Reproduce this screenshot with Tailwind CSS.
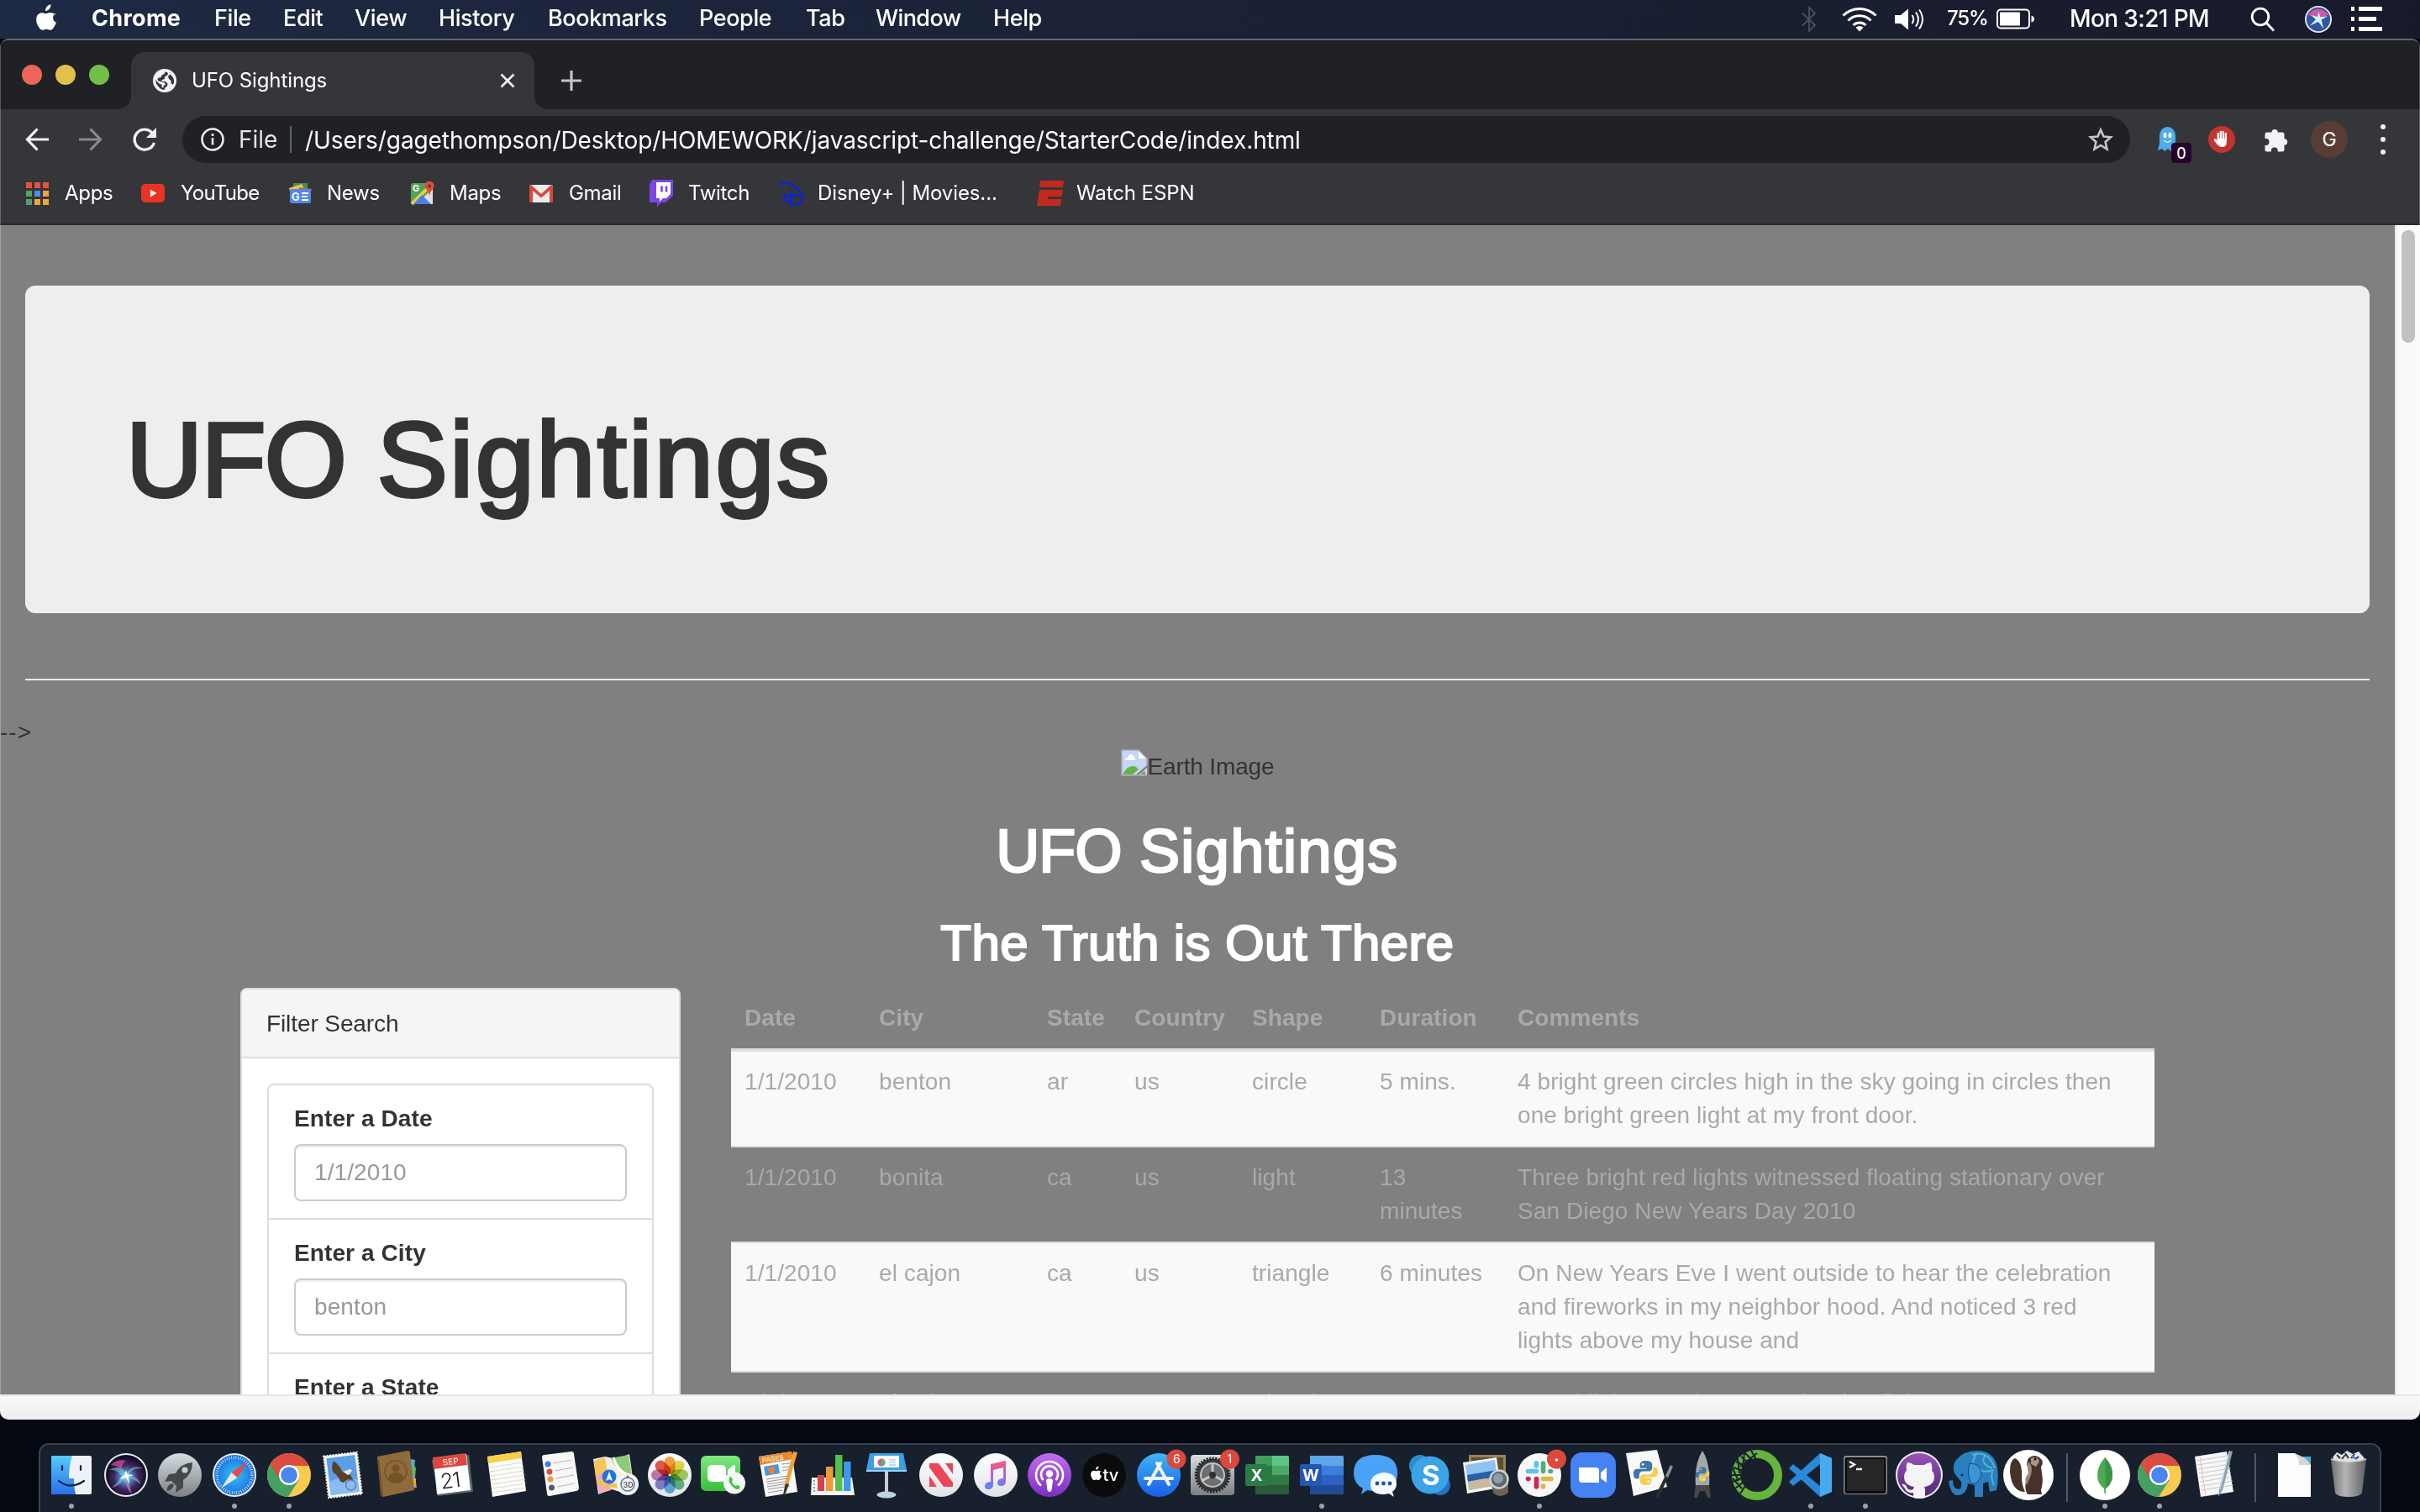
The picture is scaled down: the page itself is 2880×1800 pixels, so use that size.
<!DOCTYPE html>
<html lang="en">
<head>
<meta charset="utf-8">
<title>UFO Sightings</title>
<script src="https://cdn.jsdelivr.net/npm/@tailwindcss/browser@4"></script>
</head>
<body class="flex h-[1800px] w-[2880px] flex-col overflow-hidden bg-[#040810]">

<!-- Shared gradients and symbols -->
<svg class="absolute h-0 w-0" aria-hidden="true">
  <defs>
    <linearGradient id="blue" x1="0" y1="0" x2="0" y2="1"><stop offset="0" stop-color="#3fb4f8"/><stop offset="1" stop-color="#1a5de6"/></linearGradient>
    <linearGradient id="finder" x1="0" y1="0" x2="0" y2="1"><stop offset="0" stop-color="#55ccfa"/><stop offset="1" stop-color="#2a6fe8"/></linearGradient>
    <linearGradient id="silver" x1="0" y1="0" x2="0" y2="1"><stop offset="0" stop-color="#d5dee3"/><stop offset="1" stop-color="#7d8083"/></linearGradient>
    <linearGradient id="green" x1="0" y1="0" x2="0" y2="1"><stop offset="0" stop-color="#7fe87f"/><stop offset="1" stop-color="#38bf3c"/></linearGradient>
    <linearGradient id="purple" x1="0" y1="0" x2="0" y2="1"><stop offset="0" stop-color="#c36df0"/><stop offset="1" stop-color="#7a2fc0"/></linearGradient>
    <linearGradient id="git" x1="0" y1="0" x2="0" y2="1"><stop offset="0" stop-color="#9a52b5"/><stop offset="1" stop-color="#4f2878"/></linearGradient>
    <linearGradient id="white" x1="0" y1="0" x2="0" y2="1"><stop offset="0" stop-color="#fff"/><stop offset="1" stop-color="#dfe3e8"/></linearGradient>
    <linearGradient id="note" x1="0" y1="0" x2="0" y2="1"><stop offset="0" stop-color="#f9596b"/><stop offset=".45" stop-color="#c15bd8"/><stop offset="1" stop-color="#4f8df8"/></linearGradient>
    <linearGradient id="metal" x1="0" y1="0" x2="1" y2="0"><stop offset="0" stop-color="#6e7072"/><stop offset=".4" stop-color="#b3b5b7"/><stop offset="1" stop-color="#5d5f61"/></linearGradient>
    <radialGradient id="safari" cx=".5" cy=".5" r=".5"><stop offset="0" stop-color="#37c3f3"/><stop offset="1" stop-color="#1d6fe0"/></radialGradient>
    <radialGradient id="siri" cx=".5" cy=".55" r=".5"><stop offset="0" stop-color="#d9f7ff"/><stop offset=".25" stop-color="#4c8fd0"/><stop offset=".6" stop-color="#43275f"/><stop offset="1" stop-color="#130d26"/></radialGradient>
    <symbol id="chrome" viewBox="0 0 52 52">
      <circle cx="26" cy="26" r="26" fill="#f7ca50"/>
      <path d="M26 26 3.5 13A26 26 0 0 0 25 52L37.500 32z" fill="#45a061"/>
      <path d="M3.500 13A26 26 0 0 1 48.500 13L50 15H26A12 12 0 0 0 14 30z" fill="#dc4b3f"/>
      <circle cx="26" cy="26" r="12" fill="#fff"/><circle cx="26" cy="26" r="9.800" fill="#4a86ee"/>
    </symbol>
    <symbol id="apple" viewBox="0 0 24 29">
      <path d="M17 0c.3 2-.6 3.900-1.700 5.100-1.100 1.300-2.700 2.100-4.100 2-.2-1.900.7-3.800 1.700-5C14 .9 15.700.1 17 0zM22.300 9.800c-1.900 1.200-2.900 2.800-2.800 4.900 0 2.600 1.500 4.400 3.500 5.200-.6 1.900-1.500 3.600-2.600 5.200-1.100 1.500-2.200 3-3.900 3-1.700.1-2.300-1-4.300-1s-2.600 1-4.200 1c-1.700.1-3-1.600-4.100-3.100C1.500 21.800-.1 16.300 2 12.400c1.100-2 3.100-3.300 5.300-3.300 1.700 0 3.200 1.100 4.300 1.100 1 0 2.900-1.400 4.900-1.200 2 .1 4.200.7 5.800 2.800z"/>
    </symbol>
    <symbol id="python" viewBox="0 0 32 32">
      <path d="M16 1c-5 0-7 2-7 5v4h8v1H6c-4 0-5 3-5 6s1 6 4 6h3v-4c0-3 2-5 5-5h7c2 0 4-2 4-4V6c0-3-3-5-8-5z" fill="#3d75a8"/>
      <path d="M16 31c5 0 7-2 7-5v-4h-8v-1h11c4 0 5-3 5-6s-1-6-4-6h-2v4c0 3-2 5-5 5h-7c-2 0-4 2-4 4v4c0 3 3 5 7 5z" fill="#f7cf4d"/>
      <circle cx="12.500" cy="5.500" r="1.400" fill="#fff"/><circle cx="19.500" cy="26.500" r="1.400" fill="#fff"/>
    </symbol>
  </defs>
</svg>

<!-- System menu bar -->
<header class="flex h-[46px] shrink-0 items-center bg-gradient-to-r from-[#1e2943] to-[#171a2a] pl-[42px] font-['Inter',sans-serif] text-[27px] font-medium tracking-[-0.4px] whitespace-nowrap text-white">
  <svg class="mb-[5px] h-[32px] w-[26px] fill-white"><use href="#apple"/></svg>
  <nav class="flex pl-[41px] pb-0.5">
    <span class="w-[146px] font-bold tracking-[0.300px]">Chrome</span>
    <span class="w-[82px]">File</span>
    <span class="w-[85px]">Edit</span>
    <span class="w-[100px]">View</span>
    <span class="w-[130px]">History</span>
    <span class="w-[180px]">Bookmarks</span>
    <span class="w-[127px]">People</span>
    <span class="w-[83px]">Tab</span>
    <span class="w-[140px] tracking-[-0.6px]">Window</span>
    <span>Help</span>
  </nav>
  <div class="ml-auto flex items-center pr-[45px]">
    <svg class="mr-[29px] h-[32px] w-[20px]" viewBox="0 0 20 32" fill="none" stroke="#4b5060" stroke-width="1.800"><path d="M2 8.500 17 23 10 30V2l7 7L2 23.500"/></svg>
    <svg class="mr-[21px] h-[30px] w-[42px]" viewBox="0 0 42 30" fill="none" stroke="#fff" stroke-width="3"><path d="M1.500 10.500a27.500 27.500 0 0 1 39 0M7.500 16.500a19 19 0 0 1 27 0M13.500 22a11 11 0 0 1 15 0"/><path d="M21 29.500l-4.500-4.800a6.500 6.500 0 0 1 9 0z" fill="#fff" stroke="none"/></svg>
    <svg class="mr-[28px] h-[26px] w-[34px]" viewBox="0 0 34 26" fill="none" stroke="#fff" stroke-width="2"><path d="M0 8h7l9-7.500v25L7 18H0z" fill="#fff" stroke="none"/><path d="M20.500 8q3.500 5 0 10M25 4.500q6 8.500 0 17M29 1.500q8 11.500 0 23"/></svg>
    <span class="w-[59px] pb-0.5 text-[24px] tracking-[-1.200px]">75%</span>
    <svg class="mr-[41px] h-[26px] w-[46px]" viewBox="0 0 46 26"><rect x="1" y="1.500" width="38" height="22" rx="4" fill="none" stroke="#fff" stroke-width="2"/><rect x="4" y="4.500" width="24" height="16" rx="1" fill="#fff"/><path d="M41.500 8.500q3.500 1 3.500 4t-3.500 4z" fill="#fff"/></svg>
    <span class="w-[215px] pb-0.5 text-[28px] tracking-[-0.600px]">Mon 3:21 PM</span>
    <svg class="mr-[35px] h-[30px] w-[30px]" viewBox="0 0 30 30" fill="none" stroke="#fff" stroke-width="2.800"><circle cx="12" cy="12" r="9.800"/><path d="m19 19 9 9.500"/></svg>
    <svg class="mr-[23px] h-[32px] w-[32px]" viewBox="0 0 52 52"><circle cx="26" cy="26" r="26" fill="#e9e9f4"/><circle cx="26" cy="26" r="23" fill="#31559e"/><path d="M6 17Q26-6 46 17L26 26z" fill="#cf57a3"/><path d="m26 10 4 12 14-2-12 7 4 17-10-13-16 7 11-12-9-8 13 3z" fill="#cdf6ff"/></svg>
    <svg class="h-[30px] w-[37px]" viewBox="0 0 37 30" fill="#fff"><path d="M0 0h4v5H0zM9 0h28v5H9zM0 12h4v5H0zM9 12h21v5H9zM0 24h4v5H0zM9 24h28v5H9z"/></svg>
  </div>
</header>

<!-- Browser window -->
<main class="relative flex h-[1644px] shrink-0 flex-col overflow-hidden rounded-[10px] border-t-2 border-[#65686a] bg-[#35363a]">

  <!-- Tab strip -->
  <div class="flex h-[82px] shrink-0 bg-[#202124] font-['Inter',sans-serif]">
    <div class="flex w-[156px] gap-4 pt-[29px] pl-[26px]">
      <i class="h-6 w-6 rounded-full bg-[#ed655a]"></i><i class="h-6 w-6 rounded-full bg-[#e1c04c]"></i><i class="h-6 w-6 rounded-full bg-[#72be47]"></i>
    </div>
    <div class="relative mt-[14px] flex w-[480px] items-center rounded-t-[16px] bg-[#35363a] pl-[26px] pr-[23px] text-white">
      <svg class="absolute -left-4 bottom-0 h-4 w-4" viewBox="0 0 16 16" fill="#35363a"><path d="M16 0v16H0A16 16 0 0 0 16 0z"/></svg>
      <svg class="absolute -right-4 bottom-0 h-4 w-4" viewBox="0 0 16 16" fill="#35363a"><path d="M0 0v16h16A16 16 0 0 1 0 0z"/></svg>
      <svg class="h-7 w-7" viewBox="0 0 28 28"><circle cx="14" cy="14" r="14" fill="#f1f3f4"/><path d="M14.500 3.500q3 0 3.500 2l-1 2.500-3 1v3l-3 1-1 2h5l2.500 2.500-.5 3-2.500 2-1 2.500q-4 0-7-4Q3.500 18 3 13l5 5 2.500.5v3l2 1.500v-3l2.500-1-1-2.500-4-1L6 14q-1-1 0-3l3.500-1 1-2.500 3-1.500z" fill="#35363a"/><path d="M20 6.500l-2 2.500 1 3 2.500 2v3l2.500 2q1.500-3 1-6-1-4.500-5-6.500z" fill="#35363a"/></svg>
      <span class="ml-[18px] text-[24px] tracking-[-0.100px]">UFO Sightings</span>
      <svg class="ml-auto h-[18px] w-[18px]" viewBox="0 0 18 18" stroke="#f1f3f4" stroke-width="2.600"><path d="m1.500 1.500 15 15m0-15-15 15"/></svg>
    </div>
    <svg class="mt-9 ml-8 h-6 w-6" viewBox="0 0 24 24" stroke="#c2c4c7" stroke-width="3.200"><path d="M12 0v24M0 12h24"/></svg>
  </div>

  <!-- Toolbar -->
  <div class="flex h-[72px] shrink-0 items-center pl-[30px] font-['Inter',sans-serif] text-[28px] text-white">
    <svg class="h-7 w-7" viewBox="0 0 28 28" fill="none" stroke="#f1f3f4" stroke-width="3.200"><path d="M14.500 1.500 2.500 14l12 12.500M2.500 14H28"/></svg>
    <svg class="ml-9 h-7 w-7" viewBox="0 0 28 28" fill="none" stroke="#87898c" stroke-width="3.200"><path d="m13.500 1.500 12 12.500-12 12.500M25.500 14H0"/></svg>
    <svg class="ml-9 h-7 w-7" viewBox="0 0 28 28" fill="none" stroke="#f1f3f4" stroke-width="3.400"><path d="M25.500 18A12 12 0 1 1 22.500 5.500L25 8"/><path d="M28 0v12H16z" fill="#f1f3f4" stroke="none"/></svg>
    <div class="ml-[31px] flex h-14 w-[2318px] items-center rounded-full bg-[#202124] pl-[22px] pr-5">
      <svg class="h-7 w-7" viewBox="0 0 28 28" fill="none" stroke="#e8eaed" stroke-width="2.600"><circle cx="14" cy="14" r="12.500"/><path d="M14 12v8.500M14 7v3"/></svg>
      <span class="ml-[17px] w-[61px] text-[#e0e2e5]">File</span>
      <i class="h-8 w-0.5 bg-[#5f6368]"></i>
      <span class="ml-4 pt-px tracking-[-0.090px]">/Users/gagethompson/Desktop/HOMEWORK/javascript-challenge/StarterCode/index.html</span>
      <svg class="ml-auto h-[30px] w-[30px]" viewBox="0 0 30 30" fill="none" stroke="#c4c6c9" stroke-width="2.600"><path d="m15 3.500 3.500 8 8.500.8-6.400 5.700 1.900 8.500L15 22l-7.500 4.500L9.400 18 3 12.300l8.500-.8z"/></svg>
    </div>
    <div class="relative ml-[32px] h-[30px] w-[25px]">
      <svg class="h-[30px] w-[25px]" viewBox="0 0 25 30"><path d="M3 10a9.500 10 0 0 1 19 0v10l2 8-4-2-3 3-4-3-4 3-3-3-5 2 2-8z" fill="#4badeb"/><ellipse cx="9.500" cy="10" rx="2" ry="3.200" fill="#fff"/><ellipse cx="15.500" cy="10" rx="2" ry="3.200" fill="#fff"/><path d="M8 15.500q4.500 5 9 0-1 3-4.500 3t-4.500-3z" fill="#fff" stroke="#fff" stroke-width=".5"/></svg>
      <span class="absolute top-[19px] left-[17px] flex h-6 w-6 items-center justify-center rounded bg-[#28042c] text-[18px] font-medium">0</span>
    </div>
    <svg class="ml-9 h-8 w-8" viewBox="0 0 32 32"><circle cx="16" cy="16" r="16" fill="#c3342f"/><g fill="none" stroke="#fff" stroke-width="2.300" stroke-linecap="round"><path d="M11.800 17V9M14.800 16V6.800M17.800 16V6.800M20.800 17V8.800"/><path d="m8 16.500 4 5" stroke-width="2.800"/></g><path d="M10.700 15h11.200v4q0 6-5.400 6-4 0-6.500-4z" fill="#fff"/></svg>
    <svg class="ml-[35px] h-[29px] w-[29px]" viewBox="0 0 29 29" fill="#f1f3f4"><path d="M8.500 5.500a3.600 3.600 0 0 1 7.200 0H21a2.500 2.500 0 0 1 2.500 2.500v5.300a3.700 3.700 0 0 1 0 7.400V26a2.500 2.500 0 0 1-2.500 2.500h-5.200v-1a4 4 0 0 0-8 0v1H3A2.500 2.500 0 0 1 .5 26v-5h1a4 4 0 0 0 0-8h-1V8A2.500 2.500 0 0 1 3 5.500z"/></svg>
    <span class="ml-[26px] flex h-11 w-11 items-center justify-center rounded-full bg-[#593d34] text-[23px]">G</span>
    <span class="ml-[39px] flex flex-col gap-[9px]"><i class="h-1.5 w-1.5 rounded-full bg-[#f1f3f4]"></i><i class="h-1.5 w-1.5 rounded-full bg-[#f1f3f4]"></i><i class="h-1.5 w-1.5 rounded-full bg-[#f1f3f4]"></i></span>
  </div>

  <!-- Bookmarks bar -->
  <div class="flex h-[66px] shrink-0 items-center border-b-2 border-[#2a2a2c] pb-2 pl-[30px] font-['Inter',sans-serif] text-[24px] tracking-[-0.300px] whitespace-nowrap text-white">
    <div class="flex w-[138px] items-center gap-[17px]">
      <svg class="h-[30px] w-[30px]" viewBox="0 0 30 30"><path d="M1 2h7v7H1zM11 2h7v7h-7zM21 2h7v7h-7z" fill="#e8513f"/><path d="M1 12h7v7H1z" fill="#55a363"/><path d="M11 12h7v7h-7z" fill="#4a8df0"/><path d="M21 12h7v7h-7z" fill="#f0a43c"/><path d="M1 22h7v7H1z" fill="#55a363"/><path d="M11 22h7v7h-7zM21 22h7v7h-7z" fill="#eda73c"/></svg>Apps</div>
    <div class="flex w-[174px] items-center gap-[17px] tracking-[-0.700px]">
      <svg class="h-[30px] w-[30px]" viewBox="0 0 30 30"><rect x="0" y="4" width="28" height="22" rx="5" fill="#eb3323"/><path d="M11 10.500v9l7.500-4.500z" fill="#fff"/></svg>YouTube</div>
    <div class="flex w-[146px] items-center gap-[17px]">
      <svg class="h-[30px] w-[30px]" viewBox="0 0 30 30"><path d="M7 3h17v9H7z" fill="#3f8f50"/><path d="m2 9 15-5 4 8-17 5z" fill="#f4c63d"/><path d="m14 8 15 2-3 10-13-3z" fill="#d5554a"/><rect x="3" y="10" width="25" height="17" rx="2" fill="#5388ec"/><text x="5" y="23.500" font-size="13" font-weight="700" fill="#fff" font-family="Inter,sans-serif" letter-spacing="0">G</text><path d="M17 15h8M17 19h7M17 23h8" stroke="#fff" stroke-width="2"/></svg>News</div>
    <div class="flex w-[142px] items-center gap-[17px]">
      <svg class="h-[30px] w-[30px]" viewBox="0 0 30 30"><rect x="1" y="3" width="26" height="25" rx="2" fill="#51a35b"/><path d="M8 28 27 9v19z" fill="#dfe1e2"/><path d="M2 28 25 5" stroke="#f5c945" stroke-width="4"/><path d="m4 28 10-11 11 11z" fill="#4a80e8"/><text x="3" y="13" font-size="11" font-weight="700" fill="#fff" font-family="Inter,sans-serif">G</text><path d="M23 18q-1-5-4-8a5.500 5.500 0 1 1 8 0q-3 3-4 8z" fill="#d95142"/><circle cx="23" cy="6.500" r="2" fill="#7d2720"/></svg>Maps</div>
    <div class="flex w-[142px] items-center gap-[17px]">
      <svg class="h-[30px] w-[30px]" viewBox="0 0 30 30"><rect x="0" y="5" width="28" height="21" rx="2" fill="#ececec"/><path d="M0 26V7q0-2 2-2l12 11L26 5q2 0 2 2v19h-4V12L14 20.500 4 12v14z" fill="#d6493c"/></svg>Gmail</div>
    <div class="flex w-[154px] items-center gap-[17px]">
      <svg class="h-[34px] w-[30px]" viewBox="0 0 30 34"><path d="M4 1h25v19l-9 8h-5l-5 5v-5H1V7z" fill="#7c45e8"/><path d="M9 4h17v14l-5 5h-4l-4 4v-4H9z" fill="#fff"/><path d="M15.500 8.500v7M21 8.500v7" stroke="#7c45e8" stroke-width="2.600"/></svg>Twitch</div>
    <div class="flex w-[308px] items-center gap-[17px] tracking-[-0.100px]">
      <svg class="h-[30px] w-[30px]" viewBox="0 0 30 30" fill="none" stroke="#0a22e0" stroke-width="2.400"><path d="M1 4Q6 1 14 4q11 4 15 15 0 6-6 9-4 2-9 0M6 19q5-3 19-1M16 12q-2 8 0 15M7 19q0 6 9 7"/></svg>Disney+ | Movies...</div>
    <div class="flex items-center gap-[15px] tracking-[-0.100px]">
      <svg class="h-[32px] w-[32px]" viewBox="0 0 32 32" fill="#c5281c"><path d="M4 1h28l-1 8H3zM3 12h28l-1 8H13l-.5 3H29l-1 8H0z"/></svg>Watch ESPN</div>
  </div>

  <!-- Page viewport -->
  <div class="flex h-[1392px] shrink-0 font-['Liberation_Sans',Arial,sans-serif] text-[28px] leading-[40px] text-[#333]">
    <div class="w-[2850px] overflow-hidden bg-[#808080] pt-[72px]">
      <section class="mx-[30px] h-[390px] rounded-[12px] bg-[#eee] px-[120px] pt-[139px]">
        <h1 class="text-[126px] leading-[138.6px] tracking-[2.500px] [-webkit-text-stroke:4px_#333]"><span class="tracking-[-1.600px]">UFO</span> Sightings</h1>
      </section>
      <hr class="mx-[30px] mt-[78px] border-0 border-t-2 border-[#eee]">
      <p class="mt-[42px] h-10 tracking-[1px]">--&gt;</p>
      <div class="flex h-[39px] justify-center">
        <svg class="h-8 w-8" viewBox="0 0 32 32"><path d="M1 1h20l10 10v8L17 31H1z" fill="#c6d6f5"/><path d="M31 22v9H21z" fill="#c6d6f5"/><path d="M21 1v10h10z" fill="#fff"/><path d="M5 13q0-3 3-3 1-4 4-4t4 4q2 1 1 3z" fill="#fff"/><path d="M2 30q5-10 12-10 4 0 7 4l-7 6z" fill="#6cb143"/><path d="M25 28l3-2 2 4h-6z" fill="#6cb143"/><path d="M31 31H1V1h20l10 10v7" fill="none" stroke="#a5aab5" stroke-width="1.500"/></svg>
        <span class="pt-[1px] tracking-[-0.150px]">Earth Image</span>
      </div>
      <div class="text-center text-white">
        <h1 class="mt-[43px] text-[72px] leading-[79px] tracking-[1.400px] [-webkit-text-stroke:2.500px_#fff]"><span class="tracking-[-0.900px]">UFO</span> Sightings</h1>
        <h2 class="mt-[37px] mb-[20px] text-[60px] leading-[66px] tracking-[0.400px] [-webkit-text-stroke:2.200px_#fff]">The Truth is Out There</h2>
      </div>
      <div class="flex items-start pl-[286px]">
        <aside class="h-[700px] w-[524px] rounded-t-[8px] border-2 border-[#ddd] bg-white">
          <div class="h-[82px] rounded-t-[6px] border-b-2 border-[#ddd] bg-[#f5f5f5] px-[29px] pt-[21px] tracking-[-0.100px]">Filter Search</div>
          <ul class="mx-[30px] mt-[30px] rounded-t-[8px] border-2 border-[#ddd] font-bold tracking-[0.100px]">
            <li class="h-[158px] px-[30px] pt-5"><label>Enter a Date</label><div class="mt-[10px] h-[68px] rounded-[8px] border-2 border-[#ccc] px-[22px] py-3 font-normal text-[#999] shadow-[inset_0_2px_2px_rgba(0,0,0,0.075)]">1/1/2010</div></li>
            <li class="h-[160px] border-t-2 border-[#ddd] px-[30px] pt-5"><label>Enter a City</label><div class="mt-[10px] h-[68px] rounded-[8px] border-2 border-[#ccc] px-[22px] py-3 font-normal text-[#999] shadow-[inset_0_2px_2px_rgba(0,0,0,0.075)]">benton</div></li>
            <li class="h-[160px] border-t-2 border-[#ddd] px-[30px] pt-5"><label>Enter a State</label></li>
          </ul>
        </aside>
        <table class="ml-[60px] w-[1694px] table-fixed border-collapse text-left align-top tracking-[0.080px] text-[#a9a9a9]">
          <colgroup><col class="w-[160px]"><col class="w-[200px]"><col class="w-[104px]"><col class="w-[140px]"><col class="w-[152px]"><col class="w-[164px]"><col></colgroup>
          <thead>
            <tr class="h-[74px] border-b-4 border-[#ddd] align-top *:px-4 *:pt-4"><th>Date</th><th>City</th><th>State</th><th>Country</th><th>Shape</th><th>Duration</th><th>Comments</th></tr>
          </thead>
          <tbody class="whitespace-nowrap">
            <tr class="h-[115px] bg-[#f9f9f9] align-top *:px-4 *:pt-4"><td>1/1/2010</td><td>benton</td><td>ar</td><td>us</td><td>circle</td><td>5 mins.</td><td>4 bright green circles high in the sky going in circles then<br>one bright green light at my front door.</td></tr>
            <tr class="h-[114px] border-t-2 border-[#ddd] align-top *:px-4 *:pt-4"><td>1/1/2010</td><td>bonita</td><td>ca</td><td>us</td><td>light</td><td>13<br>minutes</td><td>Three bright red lights witnessed floating stationary over<br>San Diego New Years Day 2010</td></tr>
            <tr class="h-[154px] border-t-2 border-[#ddd] bg-[#f9f9f9] align-top *:px-4 *:pt-4"><td>1/1/2010</td><td>el cajon</td><td>ca</td><td>us</td><td>triangle</td><td>6 minutes</td><td>On New Years Eve I went outside to hear the celebration<br>and fireworks in my neighbor hood. And noticed 3 red<br>lights above my house and</td></tr>
            <tr class="h-[114px] border-t-2 border-[#ddd] align-top *:px-4 *:pt-4"><td>1/1/2010</td><td>el cajon</td><td>ca</td><td>us</td><td>triangle</td><td>12<br>minutes</td><td>4 Red lights moving over El Cajon flying</td></tr>
          </tbody>
        </table>
      </div>
    </div>
    <div class="w-[30px] border-l-2 border-[#e8e8e8] bg-[#fafafa] pt-1.5 pl-1.5"><i class="block h-[134px] w-4 rounded-full bg-[#c1c1c1]"></i></div>
  </div>
  <div class="h-[30px] shrink-0 border-t-2 border-[#e6e6e6] bg-gradient-to-b from-[#f8f8f8] to-[#eee]"></div>
  <div class="pointer-events-none absolute inset-0 rounded-b-[10px] border-x border-white/25"></div>
</main>

<!-- Dock -->
<footer class="mt-7 ml-[46px] flex h-[90px] w-[2788px] shrink-0 rounded-t-[12px] border-2 border-[#3a414c] bg-[#17202c] pl-[4.600px] font-['Inter',sans-serif] [&>div]:flex [&>div]:w-[64.700px] [&>div]:shrink-0 [&>div]:flex-col [&>div]:items-center [&>div]:gap-2 [&>div]:pt-2.5 [&_i]:h-1.5 [&_i]:w-1.5 [&_i]:rounded-full [&_i]:bg-[#9ba1aa] [&_svg]:h-[52px] [&_svg]:w-[52px] [&_svg]:overflow-visible">
  <div><svg viewBox="0 0 52 52"><rect x="2" y="3" width="48" height="46" rx="2" fill="#eef2f8"/><path d="M27 3H4a2 2 0 0 0-2 2v42a2 2 0 0 0 2 2h27q-2-8-2-19h-6Q23 14 27 3z" fill="url(#finder)"/><path d="M15 15v5M37 15v5M11 33q14 11 30 0" fill="none" stroke="#12233c" stroke-width="2.200" stroke-linecap="round"/></svg><i></i></div>
  <div><svg viewBox="0 0 52 52"><circle cx="26" cy="26" r="26" fill="#e8e8ee"/><circle cx="26" cy="26" r="24" fill="url(#siri)"/><path d="M5 20q18-8 21 6Q32 12 47 18q-16-1-19 9 14 1 15 10-9-8-16-8l6 19q-8-8-9-19-5 10-15 12 9-8 12-14Q14 18 5 20z" fill="#7fe8e0" opacity=".5"/><path d="m26 20 1.500 5 8 1-7 2 2 9-4.500-8-8 2 6-5z" fill="#fff"/><path d="M25 28q3 8 7 20-6-5-7-20zM8 14q8-8 18-5-5 3-5 10-5-4-13-5z" fill="#e14f9c" opacity=".7"/></svg></div>
  <div><svg viewBox="0 0 52 52"><circle cx="26" cy="26" r="26" fill="url(#silver)"/><path d="M41 11q-14 1-20 13l-8 1-5 9 8-1 6 6-1 8 9-6v-9Q41 25 41 11z" fill="#45484b"/><circle cx="32" cy="20" r="3.600" fill="#c9d0d4"/><path d="M17 36q-7 2-6 9 6-1 8-7z" fill="#45484b"/></svg></div>
  <div><svg viewBox="0 0 52 52"><circle cx="26" cy="26" r="26" fill="#e9eef4"/><circle cx="26" cy="26" r="24" fill="url(#safari)"/><circle cx="26" cy="26" r="21" fill="none" stroke="#dff2fd" stroke-width="3.500" stroke-dasharray=".8 1.900"/><path d="M42 10 22.500 23l7 6z" fill="#f0443c"/><path d="m10 42 12.500-19 7 6z" fill="#e8e8e8"/></svg><i></i></div>
  <div><svg><use href="#chrome"/></svg><i></i></div>
  <div><svg viewBox="0 0 52 52"><g transform="rotate(-7 26 26)"><rect x="6" y="1" width="40" height="50" fill="#f3f5f8" stroke="#f3f5f8" stroke-width="2" stroke-dasharray="2 1.500"/><rect x="9" y="4" width="34" height="44" fill="#5c9ee6"/><path d="M9 32q18-6 34 2v14H9z" fill="#8abcf0"/><path d="M17 8q6 5 9 14l9 5 3 7-7-2-5 3-4-2q-2-8-7-11-2-7 2-14z" fill="#5b3f28"/><path d="m27 22 8-2 3 2-6 5z" fill="#efe7d8"/><circle cx="34" cy="39" r="6" fill="none" stroke="#4d77ab" stroke-width="1.200"/></g></svg></div>
  <div><svg viewBox="0 0 52 52"><path d="m41 7 6 1-1 9 2 0-1 12 2 12-6 1z" fill="#5aa9d9"/><path d="M42 15h5v12h-5z" fill="#62b85c"/><path d="M42 30h6v10h-6z" fill="#e9a437"/><path d="m2 4 36-7q3 0 3 3l5 44-37 8q-2 0-3-3z" fill="#8f6a3a"/><path d="M3 8 8 51" stroke="#6f4f28" stroke-width="2"/><circle cx="24" cy="22" r="13" fill="none" stroke="#74532b" stroke-width="1.600"/><circle cx="24" cy="18" r="4.500" fill="#74532b"/><path d="M15 31q1-8 9-8t10 7q-9 9-19 1z" fill="#74532b"/></svg></div>
  <div><svg viewBox="0 0 52 52"><path d="m2 8 44-6 5 44-42 5z" fill="#59646a"/><path d="m4 6 39-5 5 43-40 5z" fill="#fff"/><path d="m3 5 39-5 2 14-40 5z" fill="#dc4840"/><text x="15" y="14" font-size="10" fill="#fff" transform="rotate(-7 22 12)">SEP</text><text x="12" y="41" font-size="25" font-weight="300" fill="#222" letter-spacing="-1" transform="rotate(-7 26 32)">21</text></svg></div>
  <div><svg viewBox="0 0 52 52"><path d="m4 4 40-6 6 47-40 7z" fill="#fcfcf8"/><path d="m4 4 40-6 1 8-40 6z" fill="#f8cf45"/><path d="m6 17 40-6M7 22l40-6M7.500 27l40-6M8 32l40-6M9 37l40-6M9.500 42l40-6M10 47l40-6" stroke="#d8d8d4"/></svg></div>
  <div><svg viewBox="0 0 52 52"><path d="m7 2 32-4q3 0 3 3l6 40q0 3-3 4l-32 6q-3 0-3-3L4 5q0-3 3-3z" fill="#f8f8f8"/><circle cx="11" cy="13" r="3.500" fill="#3f7bf0"/><circle cx="13" cy="22" r="3.500" fill="#dc4c3c"/><circle cx="14" cy="31" r="3.500" fill="#f09c3c"/><circle cx="15.500" cy="41" r="3.500" fill="#555a66"/><path d="m17 12 22-4M19 21l22-4M20 30l22-4M22 40l21-4" stroke="#b8b8bc"/></svg></div>
  <div><svg viewBox="0 0 52 52"><path d="m0 7 14-3 14 3 15-6 6 42-14 4-13-4-16 6z" fill="#f1efe6"/><path d="m1 9 13-4 3 18-14 6z" fill="#f5c656"/><path d="m3 27 15-7 3 24-14 4z" fill="#efaeb4"/><path d="m21 6 21-4 4 25q-18-4-25-21z" fill="#8ecb76"/><path d="M24 5q5 18 21 22" fill="none" stroke="#fff" stroke-width="3"/><path d="m5 34 27 6" stroke="#f6c342" stroke-width="5"/><circle cx="19" cy="28" r="8.500" fill="#2671e5"/><path d="m19 22 4 11-4-2-4 2z" fill="#fff"/><circle cx="41" cy="37" r="13" fill="#f2f4f6"/><circle cx="41" cy="37" r="8" fill="none" stroke="#4c7da6" stroke-width="1.500"/><path d="m41 26 2 3h-4z" fill="#e22"/><text x="35.500" y="40.500" font-size="9" font-weight="600" fill="#555">3D</text></svg></div>
  <div><svg viewBox="0 0 52 52"><circle cx="26" cy="26" r="26" fill="url(#white)"/><g class="*:mix-blend-multiply"><rect x="19.500" y="4" width="13" height="21" rx="6.500" fill="#f6a03d"/><rect x="19.500" y="4" width="13" height="21" rx="6.500" fill="#e8d94a" transform="rotate(45 26 26)"/><rect x="19.500" y="4" width="13" height="21" rx="6.500" fill="#a9cf5a" transform="rotate(90 26 26)"/><rect x="19.500" y="4" width="13" height="21" rx="6.500" fill="#67bb8a" transform="rotate(135 26 26)"/><rect x="19.500" y="4" width="13" height="21" rx="6.500" fill="#6caee0" transform="rotate(180 26 26)"/><rect x="19.500" y="4" width="13" height="21" rx="6.500" fill="#8b85cf" transform="rotate(225 26 26)"/><rect x="19.500" y="4" width="13" height="21" rx="6.500" fill="#c67db4" transform="rotate(270 26 26)"/><rect x="19.500" y="4" width="13" height="21" rx="6.500" fill="#ea5a4d" transform="rotate(315 26 26)"/></g></svg></div>
  <div><svg viewBox="0 0 52 52"><rect x="-1" y="3" width="47" height="42" rx="6" fill="url(#green)"/><rect x="7" y="14" width="22" height="20" rx="5" fill="#fff"/><path d="m31 20 7-6q2 0 2 2v14l-9-3z" fill="#fff"/><circle cx="39" cy="35.500" r="13" fill="#f4f6f6"/><path d="M33 29q2-2 4 2l-1 3q1 3 4 5l3-1q4 2 2 4-3 3-8-2-6-6-4-11z" fill="#3cc543"/></svg></div>
  <div><svg viewBox="0 0 52 52"><path d="m3 4 39-6 7 48-38 6z" fill="#f8f8f6"/><path d="m3 4 39-6 1.500 9-39 7z" fill="#e78a2f"/><text x="7" y="11" font-size="8" font-weight="600" fill="#ffe4c0" transform="rotate(-8 10 10)">PAGES</text><path d="m9 16 17-3 2 11-17 3z" fill="#3d9ae8"/><path d="m13 18 5-2 5 1-3 8h-3z" fill="#f0802a"/><path d="m30 13 10-1M31 17l10-1M31 21l10-2M12 31l26-4M12 34l26-4M13 37l26-4M13 40l26-4M14 43l26-4M14 47l18-3" stroke="#999"/><path d="m44-2 5 1-12 42-3 9-1-10z" fill="#f2a03c"/><path d="m35 36 4 1-5 13-2-1z" fill="#333"/></svg></div>
  <div><svg viewBox="0 0 52 52"><path d="M1 29h48l3 21H0z" fill="#f5f5f7"/><path d="M4 32v14" stroke="#999" stroke-width="2" stroke-dasharray="2 2"/><rect x="8" y="26" width="8" height="19" fill="#d8424c"/><rect x="18" y="16" width="8.500" height="29" fill="#f09838"/><rect x="29" y="2" width="8.500" height="43" fill="#57be4c"/><rect x="39" y="10" width="8.500" height="35" fill="#3e97ee"/></svg></div>
  <div><svg viewBox="0 0 52 52"><rect x="24" y="20" width="4" height="29" fill="#c7ccd2"/><ellipse cx="26" cy="49.500" rx="11.500" ry="4" fill="#bfd3e2"/><path d="M6 0h40l4 20H2z" fill="#3b9fe6"/><path d="M2 20h48v2H2z" fill="#9fd4f7"/><rect x="11" y="3" width="30" height="14" fill="#fff"/><circle cx="20" cy="11" r="4.500" fill="#e0559b"/><path d="M20 6.500a4.500 4.500 0 0 1 0 9z" fill="#57be4c"/><path d="M29 8h8M29 11h8M29 14h8" stroke="#79b8e8"/></svg></div>
  <div><svg viewBox="0 0 52 52"><circle cx="26" cy="26" r="26" fill="url(#white)"/><path d="M12 12h11l17 23v5H29L12 17zM31 12h9v13zM12 27v13h9z" fill="#ec4458"/></svg></div>
  <div><svg viewBox="0 0 52 52"><circle cx="26" cy="26" r="26" fill="url(#white)"/><path d="M20 13 38 9v24q0 6-6 6-4 0-4-4t6-5h1V17l-12 3v17q0 6-6 6-4 0-4-4t6-5h1z" fill="url(#note)"/></svg></div>
  <div><svg viewBox="0 0 52 52"><circle cx="26" cy="26" r="26" fill="url(#purple)"/><g fill="none" stroke="#fff" stroke-width="2.600"><path d="M16 38.500a16 16 0 1 1 20 0"/><path d="M18.500 32a10 10 0 1 1 15 0"/></g><circle cx="26" cy="24.500" r="4.200" fill="#fff"/><path d="M22 33q0-3 4-3t4 3l-1.500 11q-.5 2-2.500 2t-2.500-2z" fill="#fff"/></svg></div>
  <div><svg viewBox="0 0 52 52"><circle cx="26" cy="26" r="26" fill="#0b0b0c"/><use href="#apple" x="9" y="15.500" width="15" height="17" fill="#fff"/><text x="24.500" y="33" font-size="20" font-weight="500" fill="#fff">tv</text></svg></div>
  <div><svg viewBox="0 0 52 52"><circle cx="26" cy="26" r="26" fill="url(#blue)"/><g stroke="#f1f5fb" stroke-width="4" stroke-linecap="round"><path d="m28 12-14 25M24 12l14 25M10 30h32"/></g><circle cx="47" cy="7" r="11.500" fill="#db483c"/><text x="43" y="12" font-size="14" fill="#fff">6</text></svg></div>
  <div><svg viewBox="0 0 52 52"><rect x="0" y="2" width="52" height="48" rx="4" fill="url(#silver)"/><circle cx="26" cy="26" r="19.500" fill="#3c3d3f" stroke="#26272a" stroke-width="4" stroke-dasharray="2 1.500"/><circle cx="26" cy="26" r="14" fill="#6c6e70" stroke="#bfc1c3" stroke-width="2"/><path d="M26 26V12M26 26l13 7M26 26l-13 7" stroke="#c5c7c9" stroke-width="3"/><circle cx="26" cy="26" r="4" fill="#2f3032"/><circle cx="46.500" cy="7" r="11.500" fill="#db483c"/><text x="43.500" y="12" font-size="14" fill="#fff">1</text></svg></div>
  <div><svg viewBox="0 0 52 52"><rect x="12" y="3" width="40" height="46" rx="2" fill="#2d7a45"/><path d="M12 3h20v12H12z" fill="#3f9e5c"/><path d="M32 3h18q2 0 2 2v10H32z" fill="#5fc487"/><path d="M32 15h20v11H32z" fill="#4ba869"/><path d="M12 38h40v9q0 2-2 2H12z" fill="#2b5a39"/><rect x="0" y="13" width="26" height="26" rx="2" fill="#2b7a47"/><text x="6.500" y="33" font-size="19" font-weight="700" fill="#fff">X</text></svg></div>
  <div><svg viewBox="0 0 52 52"><rect x="12" y="3" width="40" height="46" rx="2" fill="#2b63c2"/><path d="M12 3h38q2 0 2 2v10H12z" fill="#5fa5ea"/><path d="M12 15h40v11H12z" fill="#3b7fd8"/><path d="M12 38h40v9q0 2-2 2H12z" fill="#234a96"/><rect x="0" y="13" width="26" height="26" rx="2" fill="#2456b4"/><text x="3" y="33" font-size="19" font-weight="700" fill="#fff">W</text></svg><i></i></div>
  <div><svg viewBox="0 0 52 52"><path d="M26 2q26 0 26 22T26 45q-6 0-10-1l-7 5 2-7Q0 36 0 24 0 2 26 2z" fill="#4ba3f7"/><path d="M35 23q16 0 16 14 0 5-5 9l2 6-6-4q-4 1-7 1-15 0-15-12t15-14z" fill="#f5f8fc"/><circle cx="28" cy="36" r="2.400" fill="#1d5797"/><circle cx="35.500" cy="36" r="2.400" fill="#1d5797"/><circle cx="43" cy="36" r="2.400" fill="#1d5797"/></svg></div>
  <div><svg viewBox="0 0 52 52"><circle cx="14" cy="15" r="13" fill="#2b8dcd"/><circle cx="38" cy="38" r="12" fill="#2273c2"/><circle cx="26" cy="26" r="22.500" fill="#3ba4e6"/><text x="16" y="38" font-size="33" font-weight="700" fill="#fff">S</text></svg></div>
  <div><svg viewBox="0 0 52 52"><path d="M7 2h44v40H7z" fill="#9b8257"/><path d="M10 5h38v34H10z" fill="#5f4d30"/><path d="m0 11 40-6 5 36-40 7z" fill="#f5f5f5"/><path d="m3 14 35-6 4 30-35 6z" fill="#8fc3f0"/><path d="m5 26 35-6 1 8-35 6z" fill="#2a5fa8"/><path d="m6 34 20-4 15 5 1 3-35 6z" fill="#c9b99f"/><path d="M33 32h21v15q-10 8-18 0z" fill="#6c6256"/><circle cx="43" cy="31" r="10.500" fill="#5e6973" stroke="#d0d0cc" stroke-width="2.500"/><circle cx="42" cy="30" r="6" fill="#8c9db0"/></svg></div>
  <div><svg viewBox="0 0 52 52"><circle cx="26" cy="26" r="26" fill="#f7f7f7"/><g stroke-width="5.600" stroke-linecap="round"><path d="M22.500 12v.1M22.500 21.500h-10" stroke="#5fc3ec"/><path d="M22.500 12v3" stroke="#5fc3ec"/><path d="M30.500 12v9.500M39.500 21.500h-.5" stroke="#4fad7c"/><path d="M22.500 40v-9.500M12.500 30.500h.5" stroke="#cf2553"/><path d="M30.500 40v-1M40 30.500h-9.500" stroke="#e5b440"/></g><circle cx="46.500" cy="7" r="11.500" fill="#db483c"/><circle cx="46.500" cy="8" r="1.800" fill="#fff"/></svg><i></i></div>
  <div><svg viewBox="0 0 52 52"><rect x="-1" y="-1" width="54" height="54" rx="14" fill="#4582f2"/><path d="M9 17h20q4 0 4 4v14H13q-4 0-4-4zM35 23l7-6v18l-7-5z" fill="#fff"/></svg></div>
  <div><svg viewBox="0 0 52 52"><path d="m0 0 37-4 12 44-40 11z" fill="#f8f8f8"/><use href="#python" x="7" y="8" width="33" height="31"/><path d="m53 14 3 2-17 37-4 1 1-5z" fill="#2d2d30"/><path d="m53 14 3 2-6 13-3-2z" fill="#8d9096"/></svg></div>
  <div><svg viewBox="0 0 52 52"><path d="M26-3q10 16 8 42H18Q16 13 26-3z" fill="#a5a8ab"/><path d="m18 38-2 15h4l3-8h6l3 8h4l-2-15z" fill="#46484a"/><use href="#python" x="17" y="15" width="18" height="20"/></svg></div>
  <div><svg viewBox="0 0 52 52"><circle cx="27" cy="26" r="25" fill="none" stroke="#66b33e" stroke-width="10"/><path d="m20-3 6 10M13 0l9 9M8 4l9 8M2 10l12 6M-1 17l11 4M-3 26h12M-2 34l12-5M1 42l10-8M7 48l6-9M12-1l-2 17M4 6l2 18M-2 18l7 15M-2 30l11 12M27 0 7 16" stroke="#17202c" stroke-width="2"/></svg></div>
  <div><svg viewBox="0 0 52 52"><path d="m37 0 14 6v40l-14 6L0 18l5-5 32 26V13L5 39l-5-5z" fill="#2a88d8"/><path d="m37 0 14 6v40l-14 6z" fill="#48a9ee"/></svg><i></i></div>
  <div><svg viewBox="0 0 52 52"><rect x="0" y="3" width="52" height="46" rx="3" fill="#8a8d90"/><rect x="1.500" y="5" width="49" height="43" rx="2" fill="#0c0c0c"/><rect x="4" y="7" width="44" height="38" fill="#262626"/><path d="m7 10 6 3.500L7 17M15 19h7" fill="none" stroke="#f0f0f0" stroke-width="2.400"/></svg><i></i></div>
  <div><svg viewBox="0 0 52 52"><circle cx="26" cy="26" r="28" fill="#ededf2"/><circle cx="26" cy="26" r="26" fill="url(#git)"/><path d="M12 11q4 0 8 3h12q4-3 8-3 2 5 1 9 3 4 3 8 0 10-12 12 1 2 1 4v9q-7 2-14 0v-6q-8 1-10-5l-4-5q5-1 7 5 3 3 7 1 0-2 1-3Q8 38 8 28q0-4 3-8-1-5 1-9z" fill="#f4f4f7"/></svg></div>
  <div><svg viewBox="0 0 52 52"><path d="M5 8Q14-3 30-3q20 0 24 20 2 14-1 27l-8 2-2-12-6 2v16h-10V38l-8-2q-2 15-14 14Q-2 48-4 33l5-1q0 11 7 11 4 0 3-9L3 24Q0 14 5 8z" fill="#2a7fc0"/><path d="M24 2q20-6 27 16M30 0q-12 14 6 20M40 2q-8 10 8 16M24 12q8 14 26 8M48 22q-2 8 2 16" fill="none" stroke="#5fc0cc" stroke-width="2" opacity=".8"/><path d="M21 12q14 0 14 14-4 12-12 10-6-12-2-24z" fill="#3a96d8" stroke="#134a7a"/><circle cx="12" cy="26" r="1.600" fill="#0b2b4c"/></svg></div>
  <div><svg viewBox="0 0 52 52"><circle cx="26" cy="26" r="30" fill="#fff"/><path d="M10 6q9 4 8 22 0 10 4 18Q6 46 4 22q0-14 6-16z" fill="#463229"/><path d="M26 6q8-7 16 2 2 4-1 8l1 8q2 10-1 20l1 5H25q-4-6-2-16l4-11q-5-10-1-16z" fill="#463229"/><path d="M26 10q6 6 3 16l-5 12q-4-8 2-14-2-8 0-14z" fill="#9c8877"/><path d="M29 6q8-3 10 4l-4 6-6-3z" fill="#a89583"/><circle cx="34" cy="7" r="1.500" fill="#111"/></svg></div>
  <span class="ml-[13px] mr-[12px] mt-2.5 h-[58px] w-0.5 shrink-0 bg-[#515763]"></span>
  <div><svg viewBox="0 0 52 52"><circle cx="26" cy="26" r="30" fill="#fff"/><path d="M26 5q10 10 9 23-1 9-8 14v6h-1.500l-.5-6q-8-6-8-15 0-12 9-22z" fill="#4caa52"/><path d="M26 5q10 10 9 23-1 9-8 14z" fill="#3d9245"/></svg><i></i></div>
  <div><svg><use href="#chrome"/></svg><i></i></div>
  <div><svg viewBox="0 0 52 52"><path d="m3 4 38-6 8 48-39 6z" fill="#f7f7f7"/><path d="m5 9 38-6M6 14l38-6M7 19l38-6M7.500 24l38-6M8 29l38-6M9 34l38-6M10 39l38-6M10.500 44l38-6" stroke="#c9c9c9"/><path d="m9 4 7 47" stroke="#f0b9b9"/><path d="m44-3 4 1-12 46-5 8 1-9z" fill="#88a0b4"/><path d="m44-2-11 45" stroke="#dfe8ee"/></svg></div>
  <span class="mr-[13px] ml-[16px] mt-2.5 h-[58px] w-0.5 shrink-0 bg-[#515763]"></span>
  <div><svg viewBox="0 0 52 52"><path d="M16 4h30v30H16z" fill="#58aee0"/><path d="M7 0h20l19 14v38H7z" fill="#fdfdfd"/><path d="M26 0q6 4 6 14h14Q40 4 26 0z" fill="#d4d6d8"/></svg></div>
  <div><svg viewBox="0 0 52 52"><path d="m7 5 5-6 6 3 6-5 7 4 7-3 7 8-4 5H10z" fill="#e3e3e3"/><path d="m12 2 4 4M22 0l4 6M33 1l-4 5M38 4l-4 3M18 7l4-5" stroke="#333" stroke-width="2"/><path d="m30 3 3 3" stroke="#3b7fd8" stroke-width="3"/><path d="M5 7q21 6 42 0l-5 40q-2 5-16 5t-16-5z" fill="url(#metal)"/><path d="M5 7q21 7 42 0" fill="none" stroke="#cfd1d3" stroke-width="1.500"/></svg></div>
</footer>
</body>
</html>
